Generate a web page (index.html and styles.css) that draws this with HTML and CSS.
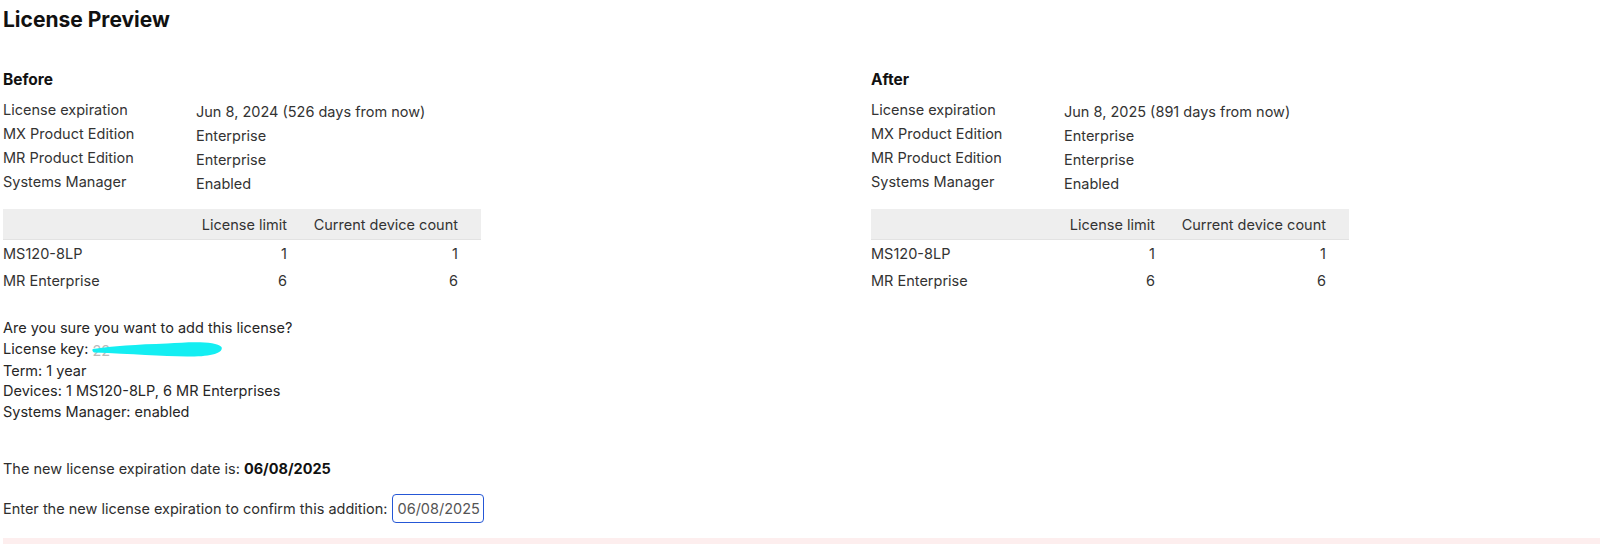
FILE: index.html
```html
<!DOCTYPE html>
<html>
<head>
<meta charset="utf-8">
<link rel="stylesheet" href="styles.css">
</head>
<body>
<div class="page">
  <h1 class="title">License Preview</h1>
  <div class="columns">
    <section class="side">
      <h2 class="side-title">Before</h2>
      <div class="facts">
        <div class="fact-label">License expiration</div><div class="fact-value">Jun 8, 2024 (526 days from now)</div>
        <div class="fact-label">MX Product Edition</div><div class="fact-value">Enterprise</div>
        <div class="fact-label">MR Product Edition</div><div class="fact-value">Enterprise</div>
        <div class="fact-label">Systems Manager</div><div class="fact-value">Enabled</div>
      </div>
      <div class="counts">
        <div class="counts-head">
          <span></span><span class="num">License limit</span><span class="num">Current device count</span>
        </div>
        <div class="counts-row">
          <span>MS120-8LP</span><span class="num">1</span><span class="num">1</span>
        </div>
        <div class="counts-row">
          <span>MR Enterprise</span><span class="num">6</span><span class="num">6</span>
        </div>
      </div>
    </section>
    <section class="side">
      <h2 class="side-title">After</h2>
      <div class="facts">
        <div class="fact-label">License expiration</div><div class="fact-value">Jun 8, 2025 (891 days from now)</div>
        <div class="fact-label">MX Product Edition</div><div class="fact-value">Enterprise</div>
        <div class="fact-label">MR Product Edition</div><div class="fact-value">Enterprise</div>
        <div class="fact-label">Systems Manager</div><div class="fact-value">Enabled</div>
      </div>
      <div class="counts">
        <div class="counts-head">
          <span></span><span class="num">License limit</span><span class="num">Current device count</span>
        </div>
        <div class="counts-row">
          <span>MS120-8LP</span><span class="num">1</span><span class="num">1</span>
        </div>
        <div class="counts-row">
          <span>MR Enterprise</span><span class="num">6</span><span class="num">6</span>
        </div>
      </div>
    </section>
  </div>

  <div class="confirm">
    <div>Are you sure you want to add this license?</div>
    <div>License key: <span class="key"><span class="key-text">22</span><svg class="redact" width="132" height="20" viewBox="0 0 132 20"><path d="M1,10 C20,7 45,5.5 75,4.5 C100,2.5 124,2 129.5,8 C132,14 118,18 95,17.5 C70,17 40,15 2,13.5 C0,12.5 0,10.5 1,10 Z" fill="#14eef2"/></svg></span></div>
    <div>Term: 1 year</div>
    <div>Devices: 1 MS120-8LP, 6 MR Enterprises</div>
    <div>Systems Manager: enabled</div>
  </div>

  <p class="new-date">The new license expiration date is: <strong>06/08/2025</strong></p>

  <div class="enter-row">
    <span>Enter the new license expiration to confirm this addition:</span>
    <input class="date-input" type="text" value="06/08/2025">
  </div>

  <div class="notice">Meraki's license co-termination will apply to all devices in this organization once the license is added.</div>
</div>
</body>
</html>
```

FILE: styles.css
```css
html, body {
  margin: 0;
  padding: 0;
  background: #ffffff;
}

body {
  font-family: Inter, "Noto Sans", "Liberation Sans", sans-serif;
  font-size: 14.5px;
  color: #2e2e2e;
}

.page {
  padding: 0 0 0 3px;
}

.title {
  margin: 0;
  padding-top: 8px;
  font-size: 21px;
  font-weight: 700;
  line-height: 24px;
  color: #111111;
}

.columns {
  display: grid;
  grid-template-columns: 868px 478px;
  margin-top: 38px;
}

.side-title {
  margin: 0;
  font-size: 15.5px;
  font-weight: 700;
  line-height: 20px;
  color: #111111;
}

.facts {
  display: grid;
  grid-template-columns: 193px 1fr;
  grid-auto-rows: 24px;
  align-items: center;
  margin-top: 9px;
  color: #333333;
}

.fact-label {
  position: relative;
  top: -2px;
}

.counts {
  width: 478px;
  margin-top: 14px;
  color: #333333;
}

.counts-head,
.counts-row {
  display: grid;
  grid-template-columns: 1fr 120px 171px;
  align-items: center;
  padding-right: 23px;
}

.counts-head {
  height: 31px;
  background: #eeeeee;
  border-bottom: 1px solid #e2e2e2;
  color: #333333;
  box-sizing: border-box;
}

.counts-row {
  height: 27px;
}

.num {
  text-align: right;
}

.confirm {
  margin-top: 24px;
  line-height: 20.5px;
  color: #262626;
}

.key {
  position: relative;
  display: inline-block;
  width: 132px;
  height: 18px;
  vertical-align: -4px;
}

.key-text {
  color: #bbbbbb;
  position: relative;
  top: -2px;
}

.redact {
  position: absolute;
  left: 0;
  top: -4px;
}

.new-date {
  margin: 37px 0 0 0;
  line-height: 20.5px;
}

.new-date strong {
  font-weight: 700;
  color: #111111;
}

.enter-row {
  display: flex;
  align-items: center;
  gap: 4px;
  margin-top: 14px;
  height: 29px;
}

.date-input {
  width: 92px;
  height: 29px;
  box-sizing: border-box;
  border: 1.5px solid #2557d6;
  border-radius: 4px;
  padding: 0 0 0 5px;
  font-family: Inter, "Noto Sans", "Liberation Sans", sans-serif;
  font-size: 14.5px;
  color: #555555;
  outline: none;
  background: #ffffff;
}

.notice {
  margin-top: 15px;
  background: #fdeeee;
  padding: 3px 0 6px 0;
  line-height: 20px;
  color: #333333;
}
```
